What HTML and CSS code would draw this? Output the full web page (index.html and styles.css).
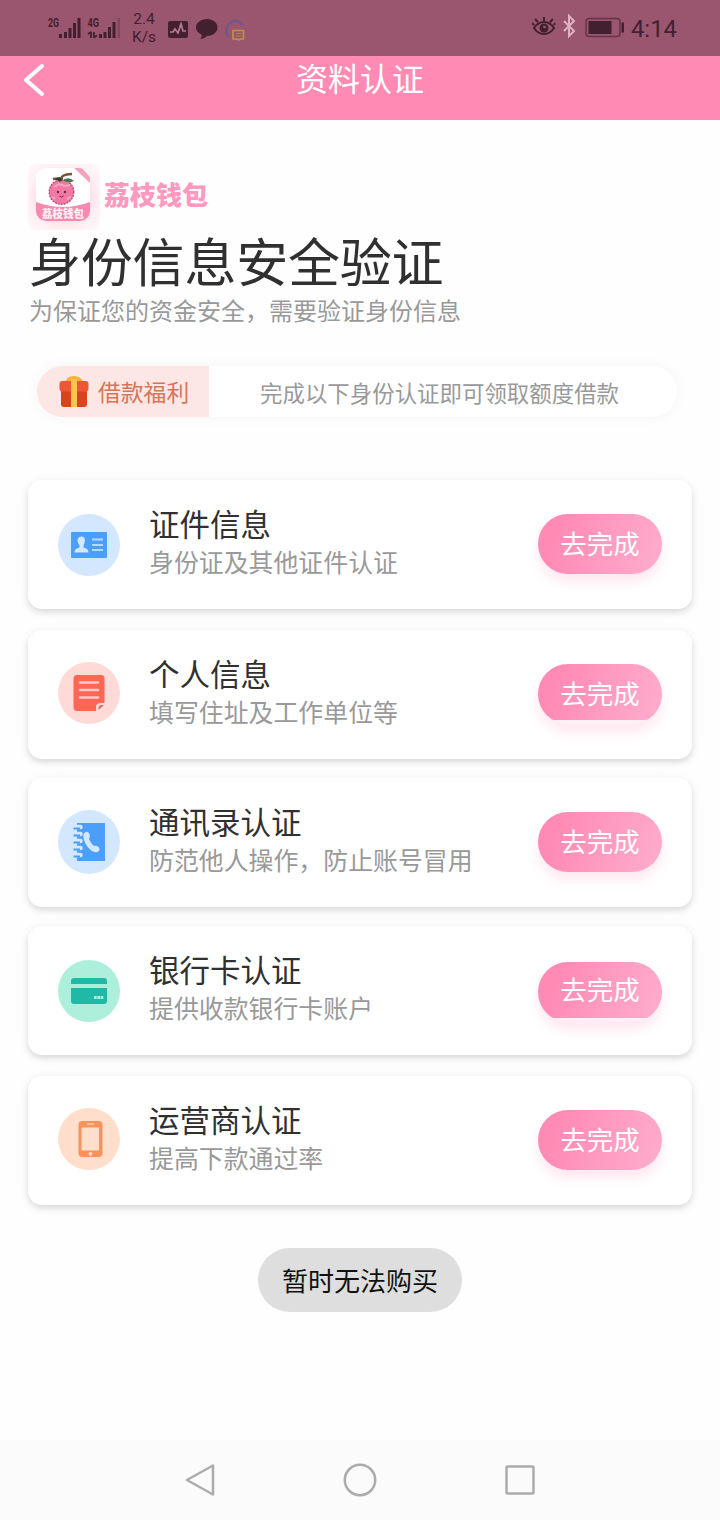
FILE: index.html
```html
<!DOCTYPE html>
<html lang="zh-CN">
<head>
<meta charset="utf-8">
<title>资料认证</title>
<link rel="stylesheet" href="styles.css">
</head>
<body>
<header class="status">
  <svg class="status-signal" width="76" height="32" viewBox="0 0 76 32">
    <g fill="#43202f"><rect x="11" y="24" width="3" height="4"/><rect x="16" y="22" width="3" height="6"/><rect x="20.500" y="18" width="3" height="10"/><rect x="25" y="13" width="3" height="15"/><rect x="29.500" y="8" width="3" height="20"/>
    <rect x="51" y="24" width="3" height="4"/><rect x="55.500" y="22" width="3" height="6"/><rect x="60" y="17" width="3" height="11"/><rect x="64.500" y="12" width="3" height="16"/></g>
    <rect x="69.500" y="8" width="2.500" height="20" fill="#84465f"/>
    <path d="M43 28v-6l-3 2M46 22v5.500l3-2" fill="none" stroke="#43202f" stroke-width="1.800" stroke-linejoin="bevel"/>
    <g class="net"><text x="0" y="17" textLength="11" lengthAdjust="spacingAndGlyphs">2G</text><text x="39.500" y="17" textLength="11.500" lengthAdjust="spacingAndGlyphs">4G</text></g>
  </svg>
  <div class="speed"><span>2.4</span><span>K/s</span></div>
  <svg class="status-apps" width="80" height="26" viewBox="0 0 80 26">
    <rect x="0" y="4" width="20" height="17" rx="2" fill="#43202f"/>
    <path d="M2 15h3l2-3 3 4 3-9 2 7h3" fill="none" stroke="#b77c93" stroke-width="1.700"/>
    <path d="M39 2c6 0 10.500 3.600 10.500 8.500S45 19 39 19c-2 2-4.500 3-7 2.500 1.500-1 2-2.500 1.500-4C30 16 28 13.500 28 10.500 28 5.600 33 2 39 2z" fill="#43202f"/>
    <path d="M61 20c-4-4-3-12 1-14 4-4 10-2 12 2" fill="none" stroke="#765687" stroke-width="2.500"/>
    <path d="M65 13.500h10.500v8.500h-3l-2 1-1-1H65z" fill="none" stroke="#bd9146" stroke-width="1.700"/><path d="M68 16.500h5M68 19h5" stroke="#b18449"/>
  </svg>
  <svg class="status-right" width="92" height="28" viewBox="0 0 92 28">
    <path d="M2 16c5-8 15-8 20 0-5 8-15 8-20 0z" fill="none" stroke="#43202f" stroke-width="2"/><circle cx="12" cy="16" r="4.500" fill="#43202f"/><circle cx="12.500" cy="15" r="1.300" fill="#9a566f"/>
    <path d="M12 9V5M6 10L3 7M18 10l3-3M2 13l-2-2M22 13l1-2" stroke="#43202f" stroke-width="2"/>
    <path d="M32 9l10 10-5 5V4l5 5-10 10" fill="none" stroke="#e0b0c4" stroke-width="2"/>
    <rect x="54" y="6.500" width="34" height="18" rx="3" fill="none" stroke="#673248" stroke-width="1.500"/><rect x="56.500" y="9" width="23" height="13" fill="#43202f"/><rect x="89.500" y="10.500" width="2.500" height="10" fill="#43202f"/>
  </svg>
  <time class="clock">4:14</time>
</header>
<nav class="topbar">
  <svg class="back" width="24" height="36" viewBox="0 0 24 36"><path d="M20 4L4 18l16 14" fill="none" stroke="#fff" stroke-width="4" stroke-linecap="round" stroke-linejoin="round"/></svg>
  <h1>资料认证</h1>
</nav>
<main>
  <div class="brand">
    <svg width="72" height="66" viewBox="0 0 72 66">
      <defs><clipPath id="logo-clip"><rect x="8" y="4" width="54" height="53" rx="10"/></clipPath></defs>
      <g clip-path="url(#logo-clip)">
        <rect x="8" y="4" width="54" height="53" fill="#fff"/>
        <path d="M8 38q27 10 54 0v19H8z" fill="#f989ae"/>
        <path d="M46 4h8l8 9v6z" fill="#f5a3bd"/>
      </g>
      <text class="logo-text" x="14" y="54" textLength="42" lengthAdjust="spacingAndGlyphs">荔枝钱包</text>
      <circle cx="33.500" cy="28" r="12.300" fill="#f279a3" stroke="#a94469" stroke-width="1.200" stroke-dasharray="2 1"/>
      <path d="M26 23l5-3 6 2 5-1M24 33l3 2M39 35l4-2" stroke="#f9a5c1" stroke-width="2" fill="none"/>
      <path d="M34 17c-3-4 2-7 10-7M35 14l-10 1" stroke="#79543b" stroke-width="2.500" fill="none"/>
      <path d="M35 16q6-4 11 1-7 3-11-1z" fill="#41794b"/><path d="M27 15q4-3 7 0l-2 3z" fill="#344331"/>
      <circle cx="30" cy="28" r="1.200" fill="#6d263b"/><circle cx="37" cy="28" r="1.200" fill="#6d263b"/><path d="M31.500 32q2 2 4 0" stroke="#822c48" fill="none"/>
    </svg>
    <span class="brand-name">荔枝钱包</span>
  </div>
  <h2>身份信息安全验证</h2>
  <p class="lead">为保证您的资金安全，需要验证身份信息</p>
  <div class="benefit">
    <div class="benefit-tag">
      <svg width="30" height="32" viewBox="0 0 30 32"><path d="M6 6Q8 0 15 0t9 6z" fill="#f3b33c"/><rect x="2" y="11" width="26" height="20" rx="3" fill="#db431d"/><rect x="0.500" y="5" width="29" height="10.500" rx="3" fill="#ed5735"/><path d="M12 3h6v28h-6z" fill="#fdc54b"/></svg>
      <span>借款福利</span>
    </div>
    <span class="benefit-text">完成以下身份认证即可领取额度借款</span>
  </div>
  <section class="cards">
    <article class="card">
      <svg class="icon" viewBox="0 0 62 62"><circle cx="31" cy="31" r="31" fill="#d3e8ff"/><rect x="13" y="18" width="36" height="26" rx="1" fill="#4b9ffa"/><path d="M16.500 38.500q0-4 5-5v-2c-4-6-1-9 2-9s5 3 2 9v2q5 1 5 5z" fill="#d3e8ff"/><path d="M34 25.500h11M34 31h11M34 36h11" stroke="#b5dcff" stroke-width="2"/></svg>
      <div class="copy"><h3>证件信息</h3><p>身份证及其他证件认证</p></div><button class="go">去完成</button>
    </article>
    <article class="card card-wide-gap">
      <svg class="icon icon-raised" viewBox="0 0 62 62"><circle cx="31" cy="31" r="31" fill="#ffdad6"/><path d="M19 13h24q3.500 0 3.500 4v24H43q-5 0-5 4v4H19q-3.500 0-3.500-4V17q0-4 3.500-4z" fill="#ff6654"/><path d="M22 20.500h18M22 28h18M22 35.500h18" stroke="#ffcdc5" stroke-width="2.700" stroke-linecap="round"/><path d="M40.500 48v-2q0-3 3-3h2.500z" fill="#d87067"/></svg>
      <div class="copy"><h3>个人信息</h3><p>填写住址及工作单位等</p></div><button class="go go-short">去完成</button>
    </article>
    <article class="card">
      <svg class="icon icon-tall" viewBox="0 0 62 64" preserveAspectRatio="none"><ellipse cx="31" cy="32" rx="31" ry="32" fill="#d3e8ff"/><path d="M19 13h28v38H19z" fill="#4b9ffa"/><path d="M15.500 17h7M15.500 24h7M15.500 31h7M15.500 38h7M15.500 45h7" stroke="#d3e8ff" stroke-width="4.500" stroke-linecap="round"/><path d="M15.500 18.500h6.500M15.500 25.500h6.500M15.500 32.500h6.500M15.500 39.500h6.500M15.500 46.500h6.500" stroke="#4b9ffa" stroke-width="1.800"/><path d="M28 22c3-1 5 4 3 7q2 5 5 7c3-1 7 2 5 5-4 4-12-2-15-11-1-4-1-7 2-8z" fill="#d3e8ff"/></svg>
      <div class="copy"><h3>通讯录认证</h3><p>防范他人操作，防止账号冒用</p></div><button class="go">去完成</button>
    </article>
    <article class="card">
      <svg class="icon" viewBox="0 0 62 62"><circle cx="31" cy="31" r="31" fill="#adefda"/><path d="M13 24v-3q0-3 3-3h30q3 0 3 3v3zM13 28h36v13q0 3-3 3H16q-3 0-3-3z" fill="#20b9a5"/><path d="M36 37.500h9.500" stroke="#adefda" stroke-width="2.800" stroke-dasharray="2.700 .6"/></svg>
      <div class="copy"><h3>银行卡认证</h3><p>提供收款银行卡账户</p></div><button class="go go-short go-low">去完成</button>
    </article>
    <article class="card card-wide-gap">
      <svg class="icon icon-raised" viewBox="0 0 62 62"><circle cx="31" cy="31" r="31" fill="#ffdecb"/><rect x="20.500" y="13" width="24" height="36" rx="4" fill="#f6925a"/><rect x="23.500" y="19.500" width="17.500" height="23" fill="#ffdecb"/><path d="M29 16h7" stroke="#ffcfaf" stroke-width="1.500"/><circle cx="32.500" cy="45.800" r="1.900" fill="#ffe3cf"/></svg>
      <div class="copy"><h3>运营商认证</h3><p>提高下款通过率</p></div><button class="go">去完成</button>
    </article>
  </section>
  <div class="toast">暂时无法购买</div>
</main>
<footer class="navigation">
  <svg width="34" height="36" viewBox="0 0 34 36"><path d="M4 18L30 3.500v29z"/></svg>
  <svg width="34" height="36" viewBox="0 0 34 36"><circle cx="17" cy="18" r="15.200"/></svg>
  <svg width="34" height="36" viewBox="0 0 34 36"><rect x="3.500" y="4.500" width="27" height="27" rx="1"/></svg>
</footer>
</body>
</html>
```
FILE: styles.css
```css
* { box-sizing: border-box; }
body { margin: 0; width: 720px; height: 1520px; display: flex; flex-direction: column; overflow: hidden; background: #fefefe; color: #303030; font-family: "Noto Sans CJK SC", sans-serif; font-weight: 400; }
h1, h2, h3, p { margin: 0; font-weight: 400; }
svg { display: block; flex: none; }
.status { height: 56px; flex: none; display: flex; align-items: flex-start; padding-left: 48px; background: #9a566f; color: #43202f; font-family: Roboto, sans-serif; }
.status-signal { margin-top: 10px; }
.net { fill: #43202f; font: bold 13px Roboto, sans-serif; }
.speed { width: 30px; margin: 10px 0 0 5px; display: flex; flex-direction: column; align-items: center; font-size: 15.500px; line-height: 18px; white-space: nowrap; }
.status-apps { margin: 17px 0 0 9px; }
.status-right { margin: 12px 0 0 284px; }
.clock { margin: 14px 0 0 7px; font-size: 23.800px; line-height: 30px; }
.topbar { height: 64px; flex: none; display: grid; grid-template-columns: 60px 1fr 60px; background: #ff8ab4; color: #fff; }
.back { margin: 6px 0 0 22px; }
h1 { font-size: 32px; line-height: 42px; text-align: center; }
main { flex: 1; padding: 44px 28px 0; }
.brand { height: 66px; display: flex; align-items: center; gap: 4px; }
.brand svg { border-radius: 8px; background: radial-gradient(ellipse, #ffd3e0 35%, #fff0f4 70%, #fffafb 100%); }
.logo-text { fill: #fff1f6; font-weight: 900; font-size: 11px; }
.brand-name { margin-top: -6px; color: #ff99bf; font-size: 26px; line-height: 30px; font-weight: 900; }
h2 { margin: 3px 0 0 1px; font-size: 52px; line-height: 54px; letter-spacing: -.2px; }
.lead { margin: 9px 0 0 1px; color: #999; font-size: 24px; line-height: 28px; }
.benefit { width: 640px; height: 51px; margin: 42px 0 0 9px; display: flex; align-items: center; border-radius: 26px; background: #fff; box-shadow: 0 0 14px rgba(0,0,0,.045); }
.benefit-tag { width: 172px; height: 51px; display: flex; align-items: center; gap: 9px; padding-left: 22px; border-radius: 26px 0 0 26px; background: #fce7e5; color: #d97357; font-size: 22.800px; white-space: nowrap; }
.benefit-text { margin-left: 51px; color: #999; font-size: 22.450px; white-space: nowrap; }
.cards { margin-top: 63px; display: flex; flex-direction: column; gap: 19px; }
.card { height: 129px; display: flex; padding: 0 30px; border-radius: 14px; background: #fff; box-shadow: 0 3px 6px rgba(0,0,0,.13), 0 2px 16px rgba(0,0,0,.035); }
.card-wide-gap { margin-top: 2px; }
.icon { width: 62px; height: 62px; margin-top: 34px; }
.icon-raised { margin-top: 32px; }
.icon-tall { height: 64px; margin-top: 32px; }
.copy { flex: 1; padding: 24px 0 0 29px; white-space: nowrap; }
h3 { font-size: 30.500px; line-height: 38px; }
.copy p { color: #999; font-size: 24.900px; line-height: 38px; }
.go { width: 124px; height: 60px; margin: 34px 0 0; padding: 0 0 3px; border: 0; border-radius: 30px; background: linear-gradient(110deg, #ff8ab4 15%, #ffa9cb 90%); color: #fff; box-shadow: 0 8px 12px rgba(255,138,180,.2); font-family: inherit; font-size: 26.500px; line-height: 57px; }
.go-short { background: linear-gradient(110deg, #ff8ab4 15%, #ffa9cb 90%) top / 100% 56px no-repeat #fff0f5; }
.go-low { margin-top: 36px; padding-bottom: 6px; line-height: 54px; }
.toast { width: 204px; height: 64px; margin: 43px auto 0; border-radius: 32px; background: #dedede; color: #111; font-size: 26px; line-height: 63px; text-align: center; }
.navigation { height: 80px; flex: none; display: flex; justify-content: center; align-items: center; gap: 126px; background: #fbfbfb; }
.navigation svg { fill: none; stroke: #acacac; stroke-width: 2.500; stroke-linejoin: round; }
```
